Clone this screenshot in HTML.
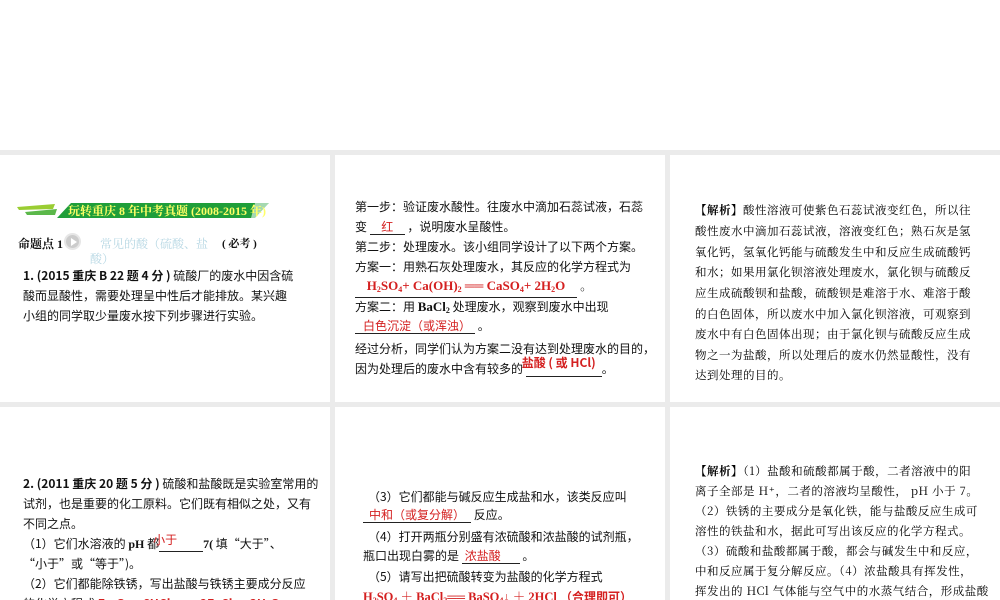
<!DOCTYPE html>
<html><head><meta charset="utf-8"><style>
*{margin:0;padding:0;box-sizing:border-box}
body{width:1000px;height:600px;overflow:hidden;background:#ebebeb;position:relative;font-family:"Liberation Serif","Noto Serif CJK SC","Noto Sans CJK SC",serif;color:#111}
.p{position:absolute;background:#fff;overflow:hidden}
.l{position:absolute;white-space:nowrap;font-size:12.5px}
.r{color:#d42020}
.u{display:inline-block;border-bottom:1px solid #222;text-align:center;line-height:14px}
b{font-weight:bold}
.s{font-family:"Noto Sans CJK SC",sans-serif;font-size:12px}
.k{font-family:"Noto Serif CJK SC",serif;font-size:11.5px;letter-spacing:0.5px;color:#000}
sub{font-size:8px;vertical-align:-2px}
</style></head><body>
<div class="p" style="left:0;top:0;width:1000px;height:150px"></div>
<div class="p" style="left:0;top:155px;width:330px;height:247px">
 <svg style="position:absolute;left:15px;top:46px" width="260" height="20">
  <polygon points="2,6 40,3 38,8 4,9" fill="#9acd32"/>
  <polygon points="10,11 42,8 40,14 12,14" fill="#5bb84a"/>
  <polygon points="56,2 254,2 240,17 42,17" fill="#1f9e3a"/>
  <polygon points="240,2 254,2 244,17 236,17" fill="#fff" opacity=".6"/>
 </svg>
 <div class="l" style="left:68px;top:47px;color:#ffff66;font-weight:bold;font-size:12px">玩转重庆 8 年中考真题 (2008-2015 年)</div>
 <div class="l" style="left:18px;top:80px;font-weight:bold;font-size:12px">命题点 1</div>
 <div style="position:absolute;left:64px;top:78px;width:17px;height:17px;border-radius:50%;background:#ccc;border:2px solid #e6e6e6"></div>
 <div style="position:absolute;left:71px;top:83px;border-left:6px solid #fff;border-top:4px solid transparent;border-bottom:4px solid transparent"></div>
 <div class="l" style="left:100px;top:80px;color:#b8d8e4;font-size:12px">常见的酸（硫酸、盐</div>
 <div class="l" style="left:90px;top:95px;color:#b8d8e4;font-size:12px">酸）</div>
 <div class="l" style="left:222px;top:80px;font-weight:bold;font-size:11px">( 必考 )</div>
 <div class="l s" style="left:23px;top:112px"><b>1. (2015 重庆 B 22 题 4 分 )</b> 硫酸厂的废水中因含硫</div>
 <div class="l s" style="left:23px;top:132px">酸而显酸性，需要处理呈中性后才能排放。某兴趣</div>
 <div class="l s" style="left:23px;top:152px">小组的同学取少量废水按下列步骤进行实验。</div>
</div>
<div class="p" style="left:335px;top:155px;width:330px;height:247px">
 <div class="l s" style="left:20px;top:43px">第一步：验证废水酸性。往废水中滴加石蕊试液，石蕊</div>
 <div class="l s" style="left:20px;top:63px">变 <span class="u r" style="width:35px">红</span> ，说明废水呈酸性。</div>
 <div class="l s" style="left:20px;top:83px">第二步：处理废水。该小组同学设计了以下两个方案。</div>
 <div class="l s" style="left:20px;top:103px">方案一：用熟石灰处理废水，其反应的化学方程式为</div>
 <div class="l" style="left:20px;top:121px"><span class="u r" style="width:222px;font-weight:bold;font-size:13px">H<sub>2</sub>SO<sub>4</sub>+ Ca(OH)<sub>2</sub> ══ CaSO<sub>4</sub>+ 2H<sub>2</sub>O</span> 。</div>
 <div class="l s" style="left:20px;top:143px">方案二：用 <b style="font-family:'Liberation Serif';font-size:13px">BaCl<sub>2</sub></b> 处理废水，观察到废水中出现</div>
 <div class="l s" style="left:20px;top:162px"><span class="u r" style="width:120px;text-align:left;padding-left:8px">白色沉淀（或浑浊）</span> 。</div>
 <div class="l s" style="left:20px;top:185px">经过分析，同学们认为方案二没有达到处理废水的目的，</div>
 <div class="l s" style="left:20px;top:205px">因为处理后的废水中含有较多的 <span class="u" style="width:76px;position:relative"><span class="r" style="position:absolute;left:-4px;top:-6px;font-weight:bold">盐酸 ( 或 HCl)</span>&nbsp;</span>。</div>
</div>
<div class="p" style="left:670px;top:155px;width:330px;height:247px">
 <div class="l k" style="left:25px;top:47px"><b>【解析】</b>酸性溶液可使紫色石蕊试液变红色，所以往</div>
 <div class="l k" style="left:25px;top:68px">酸性废水中滴加石蕊试液，溶液变红色；熟石灰是氢</div>
 <div class="l k" style="left:25px;top:89px">氧化钙，氢氧化钙能与硫酸发生中和反应生成硫酸钙</div>
 <div class="l k" style="left:25px;top:109px">和水；如果用氯化钡溶液处理废水，氯化钡与硫酸反</div>
 <div class="l k" style="left:25px;top:130px">应生成硫酸钡和盐酸，硫酸钡是难溶于水、难溶于酸</div>
 <div class="l k" style="left:25px;top:151px">的白色固体，所以废水中加入氯化钡溶液，可观察到</div>
 <div class="l k" style="left:25px;top:171px">废水中有白色固体出现；由于氯化钡与硫酸反应生成</div>
 <div class="l k" style="left:25px;top:192px">物之一为盐酸，所以处理后的废水仍然显酸性，没有</div>
 <div class="l k" style="left:25px;top:212px">达到处理的目的。</div>
</div>
<div class="p" style="left:0;top:407px;width:330px;height:193px">
 <div class="l s" style="left:23px;top:68px"><b>2. (2011 重庆 20 题 5 分 )</b> 硫酸和盐酸既是实验室常用的</div>
 <div class="l s" style="left:23px;top:88px">试剂，也是重要的化工原料。它们既有相似之处，又有</div>
 <div class="l s" style="left:23px;top:108px">不同之点。</div>
 <div class="l s" style="left:23px;top:128px">（1）它们水溶液的 <b style="font-family:'Liberation Serif'">pH</b> 都<span class="u" style="width:44px;position:relative"><span class="r" style="position:absolute;left:-6px;top:-4px">小于</span>&nbsp;</span><b style="font-family:'Liberation Serif'">7(</b> 填“大于”、</div>
 <div class="l s" style="left:23px;top:148px">“小于”或“等于”)。</div>
 <div class="l s" style="left:23px;top:168px">（2）它们都能除铁锈，写出盐酸与铁锈主要成分反应</div>
 <div class="l s" style="left:23px;top:188px">的化学方程式 <span class="r" style="font-weight:bold">Fe<sub>2</sub>O<sub>3</sub> + 6HCl ══ 2FeCl<sub>3</sub> + 3H<sub>2</sub>O</span></div>
</div>
<div class="p" style="left:335px;top:407px;width:330px;height:193px">
 <div class="l s" style="left:33px;top:81px">（3）它们都能与碱反应生成盐和水，该类反应叫</div>
 <div class="l s" style="left:28px;top:99px"><span class="u r" style="width:108px;text-align:left;padding-left:6px">中和（或复分解）</span> 反应。</div>
 <div class="l s" style="left:33px;top:121px">（4）打开两瓶分别盛有浓硫酸和浓盐酸的试剂瓶，</div>
 <div class="l s" style="left:28px;top:140px">瓶口出现白雾的是 <span class="u r" style="width:58px;text-align:left;padding-left:3px">浓盐酸</span> 。</div>
 <div class="l s" style="left:33px;top:161px">（5）请写出把硫酸转变为盐酸的化学方程式</div>
 <div class="l r" style="left:28px;top:180px;font-weight:bold;font-size:12.5px">H<sub>2</sub>SO<sub>4</sub> ＋ BaCl<sub>2</sub>══ BaSO<sub>4</sub>↓ ＋ 2HCl <span class="s">（合理即可）</span></div>
</div>
<div class="p" style="left:670px;top:407px;width:330px;height:193px">
 <div class="l k" style="left:25px;top:56px"><b>【解析】</b>（1）盐酸和硫酸都属于酸，二者溶液中的阳</div>
 <div class="l k" style="left:25px;top:76px">离子全部是 H⁺，二者的溶液均呈酸性， pH 小于 7。</div>
 <div class="l k" style="left:25px;top:96px">（2）铁锈的主要成分是氧化铁，能与盐酸反应生成可</div>
 <div class="l k" style="left:25px;top:116px">溶性的铁盐和水，据此可写出该反应的化学方程式。</div>
 <div class="l k" style="left:25px;top:136px">（3）硫酸和盐酸都属于酸，都会与碱发生中和反应，</div>
 <div class="l k" style="left:25px;top:156px">中和反应属于复分解反应。（4）浓盐酸具有挥发性，</div>
 <div class="l k" style="left:25px;top:176px">挥发出的 HCl 气体能与空气中的水蒸气结合，形成盐酸</div>
</div>
</body></html>
